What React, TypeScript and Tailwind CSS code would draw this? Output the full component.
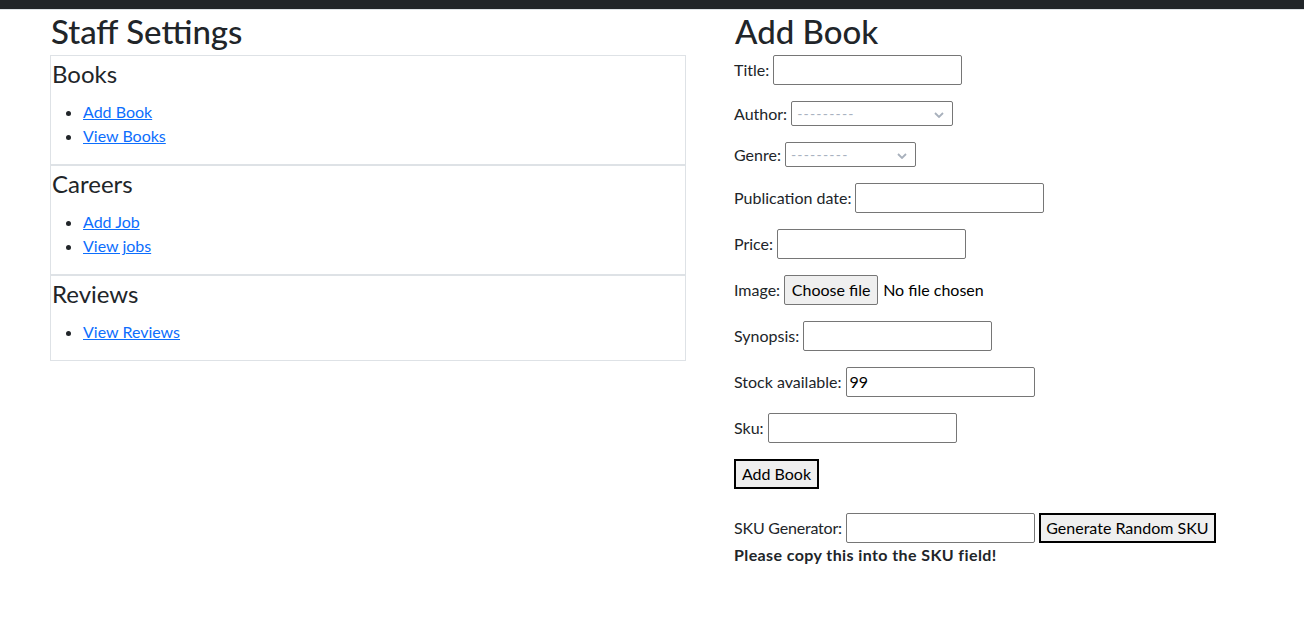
import React from "react";

const font = { fontFamily: "Lato, 'Liberation Sans', sans-serif" };

function Chevron() {
  return (
    <svg width="10" height="6" viewBox="0 0 10 6" className="absolute right-[8px] top-[10px]">
      <polyline points="1,1 5,5 9,1" fill="none" stroke="#a8b0bc" strokeWidth="1.8" />
    </svg>
  );
}

function TextInput({ value = "" }: { value?: string }) {
  return (
    <div className="w-[189px] h-[30px] border border-[#767676] rounded-[2px] bg-white flex items-center px-[3px] text-[16px] text-black">
      {value}
    </div>
  );
}

function SelectBox({ w }: { w: number }) {
  return (
    <div
      className="relative h-[25px] border border-[#767676] rounded-[2px] bg-white flex items-center pl-[5px] text-[14px] text-[#a9b2c0] tracking-[1.2px]"
      style={{ width: w }}
    >
      ---------
      <Chevron />
    </div>
  );
}

function Section({ title, links }: { title: string; links: string[] }) {
  return (
    <div className="border border-[#dee2e6]">
      <h4 className="text-[24px] leading-[29px] mt-[3px] mb-[12px] pl-[1px] text-[#212529]">{title}</h4>
      <ul className="list-disc pl-[32px] mb-[16px]">
        {links.map((l) => (
          <li key={l} className="leading-[24px] text-[16px]">
            <a href="#" className="text-[#0d6efd] underline">
              {l}
            </a>
          </li>
        ))}
      </ul>
    </div>
  );
}

function Row({ label, children, h = 30 }: { label: string; children: React.ReactNode; h?: number }) {
  return (
    <div className="flex items-center gap-[4px] mb-[16px]" style={{ height: h }}>
      <span className="whitespace-nowrap">{label}</span>
      {children}
    </div>
  );
}

export default function App() {
  return (
    <div className="min-h-[631px] bg-white text-[#212529] text-[16px]" style={font}>
      <div className="h-[9px] bg-[#212529]" />
      <div className="h-[1px] bg-[#dee2e6]" />
      <div className="flex">
        <div className="ml-[50px] w-[636px]">
          <h1 className="text-[33px] leading-[42px] font-medium h-[45px] pl-[1px]">Staff Settings</h1>
          <Section title="Books" links={["Add Book", "View Books"]} />
          <Section title="Careers" links={["Add Job", "View jobs"]} />
          <Section title="Reviews" links={["View Reviews"]} />
        </div>
        <div className="ml-[48px]">
          <h1 className="text-[33px] leading-[42px] font-medium h-[45px] pl-[1px]">Add Book</h1>
          <Row label="Title:">
            <TextInput />
          </Row>
          <Row label="Author:" h={25}>
            <SelectBox w={162} />
          </Row>
          <Row label="Genre:" h={25}>
            <SelectBox w={131} />
          </Row>
          <Row label="Publication date:">
            <TextInput />
          </Row>
          <Row label="Price:">
            <TextInput />
          </Row>
          <Row label="Image:">
            <div className="h-[30px] w-[94px] border border-[#767676] rounded-[2px] bg-[#efefef] flex items-center justify-center text-black">
              Choose file
            </div>
            <span className="ml-[1px] text-black">No file chosen</span>
          </Row>
          <Row label="Synopsis:">
            <TextInput />
          </Row>
          <Row label="Stock available:">
            <TextInput value="99" />
          </Row>
          <Row label="Sku:">
            <TextInput />
          </Row>
          <div className="h-[30px] w-[85px] border-2 border-black bg-[#efefef] flex items-center justify-center text-black">
            Add Book
          </div>
          <div className="flex items-center gap-[4px] h-[30px] mt-[24px]">
            <span className="whitespace-nowrap tracking-[-0.2px]">SKU Generator:</span>
            <TextInput />
            <div className="h-[30px] w-[177px] border-2 border-black bg-[#efefef] flex items-center justify-center text-black">
              Generate Random SKU
            </div>
          </div>
          <div className="font-bold leading-[24px] text-[#212529] tracking-[0.4px]">Please copy this into the SKU field!</div>
        </div>
      </div>
    </div>
  );
}
